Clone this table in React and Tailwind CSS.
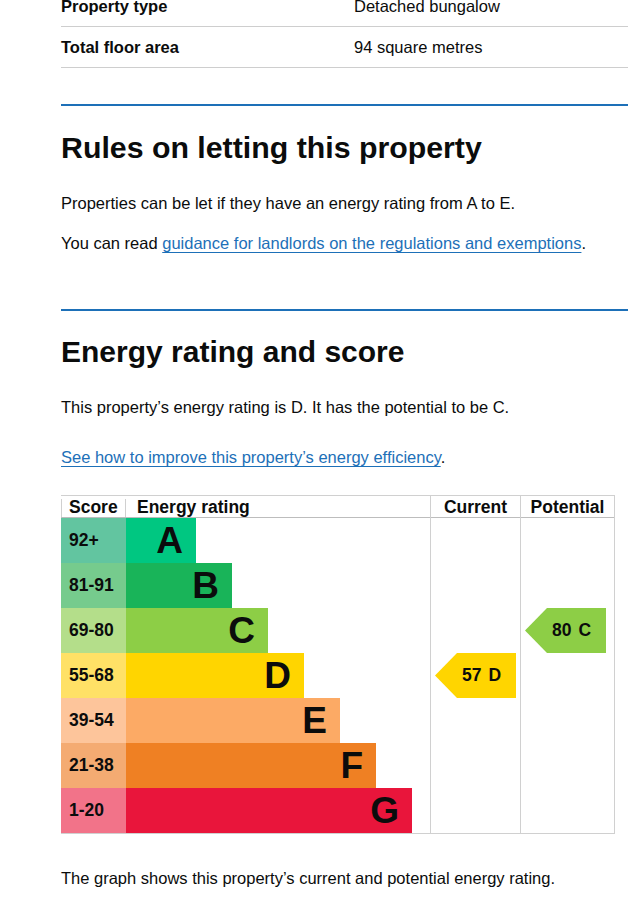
import React from "react";

const rows = [
  { score: "92+", letter: "A", scoreBg: "bg-[#62c5a0]", barBg: "bg-[#00c781]", w: "w-[70px]" },
  { score: "81-91", letter: "B", scoreBg: "bg-[#76cb8d]", barBg: "bg-[#19b459]", w: "w-[106px]" },
  { score: "69-80", letter: "C", scoreBg: "bg-[#b4de8a]", barBg: "bg-[#8dce46]", w: "w-[142px]" },
  { score: "55-68", letter: "D", scoreBg: "bg-[#ffe166]", barBg: "bg-[#ffd500]", w: "w-[178px]" },
  { score: "39-54", letter: "E", scoreBg: "bg-[#fdc59b]", barBg: "bg-[#fcaa65]", w: "w-[214px]" },
  { score: "21-38", letter: "F", scoreBg: "bg-[#f4ab72]", barBg: "bg-[#ef8023]", w: "w-[250px]" },
  { score: "1-20", letter: "G", scoreBg: "bg-[#f27389]", barBg: "bg-[#e9153b]", w: "w-[286px]" },
];

function Arrow({ value, letter, bg }) {
  return (
    <div
      className={`ml-[4px] h-[45px] w-[81px] ${bg} flex items-center gap-[7px] pl-[27px] text-[17.5px] font-bold text-[#0b0c0c] [clip-path:polygon(22px_0,100%_0,100%_100%,22px_100%,0_50%)]`}
    >
      <span>{value}</span>
      <span>{letter}</span>
    </div>
  );
}

function RatingColumn({ title, index, value, letter, bg, width }) {
  return (
    <div className={`${width} flex flex-col border-l border-[#d0d0d0]`}>
      <div className="h-[22px] pt-[3px] flex items-center justify-center border-b border-[#bdbdbd] text-[17.5px] font-bold leading-none text-[#0b0c0c]">
        {title}
      </div>
      <div className="flex flex-col">
        {rows.map((r, i) => (
          <div key={r.letter} className="h-[45px] flex items-center">
            {i === index ? <Arrow value={value} letter={letter} bg={bg} /> : null}
          </div>
        ))}
      </div>
    </div>
  );
}

export default function App() {
  return (
    <div className="min-h-[901px] bg-white pl-[61px] text-[#0b0c0c] font-['Liberation_Sans',Arial,sans-serif] overflow-hidden">
      {/* Summary list */}
      <div className="mt-[-14px] text-[16.5px] leading-[20px]">
        <div className="flex border-b border-[#cecece] py-[10px]">
          <div className="w-[293px] font-bold">Property type</div>
          <div>Detached bungalow</div>
        </div>
        <div className="flex border-b border-[#cecece] py-[10px]">
          <div className="w-[293px] font-bold">Total floor area</div>
          <div>94 square metres</div>
        </div>
      </div>

      {/* Rules section */}
      <div className="mt-[36px] border-t-2 border-[#1d70b8] pt-[24px]">
        <h2 className="text-[30.3px] leading-[36px] font-bold mb-[27px]">
          Rules on letting this property
        </h2>
        <p className="text-[16.5px] leading-[20px] mb-[20px]">
          Properties can be let if they have an energy rating from A to E.
        </p>
        <p className="text-[16.5px] leading-[20px] mb-[56px]">
          You can read{" "}
          <a
            href="#"
            className="text-[#1d70b8] underline decoration-1 underline-offset-[3px]"
          >
            guidance for landlords on the regulations and exemptions
          </a>
          .
        </p>
      </div>

      {/* Energy rating section */}
      <div className="border-t-2 border-[#1d70b8] pt-[23px]">
        <h2 className="text-[30px] leading-[36px] font-bold mb-[27px]">
          Energy rating and score
        </h2>
        <p className="text-[16.5px] leading-[20px] mb-[30px]">
          This property’s energy rating is D. It has the potential to be C.
        </p>
        <p className="text-[16.5px] leading-[20px] mb-[28px]">
          <a
            href="#"
            className="text-[#1d70b8] underline decoration-1 underline-offset-[3px]"
          >
            See how to improve this property’s energy efficiency
          </a>
          .
        </p>

        {/* Chart */}
        <div className="w-[554px] flex border-t border-b border-r border-[#d0d0d0]">
          <div className="w-[369px] flex flex-col">
            <div className="h-[22px] pt-[3px] flex border-b border-[#bdbdbd] text-[17.5px] font-bold leading-none">
              <div className="w-[65px] flex items-center pl-[7px] border-l border-r border-[#d0d0d0]">
                Score
              </div>
              <div className="flex items-center pl-[11px]">Energy rating</div>
            </div>
            {rows.map((r) => (
              <div key={r.letter} className="h-[45px] flex">
                <div
                  className={`w-[65px] ${r.scoreBg} flex items-center pl-[8px] text-[17.5px] font-bold`}
                >
                  {r.score}
                </div>
                <div
                  className={`${r.w} ${r.barBg} flex items-center justify-end pr-[13px] text-[37px] font-bold leading-none`}
                >
                  {r.letter}
                </div>
              </div>
            ))}
          </div>
          <RatingColumn
            title="Current"
            index={3}
            value="57"
            letter="D"
            bg="bg-[#ffd500]"
            width="w-[90px]"
          />
          <RatingColumn
            title="Potential"
            index={2}
            value="80"
            letter="C"
            bg="bg-[#8dce46]"
            width="w-[94px]"
          />
        </div>

        <p className="mt-[34px] text-[16.5px] leading-[20px]">
          The graph shows this property’s current and potential energy rating.
        </p>
      </div>
    </div>
  );
}
